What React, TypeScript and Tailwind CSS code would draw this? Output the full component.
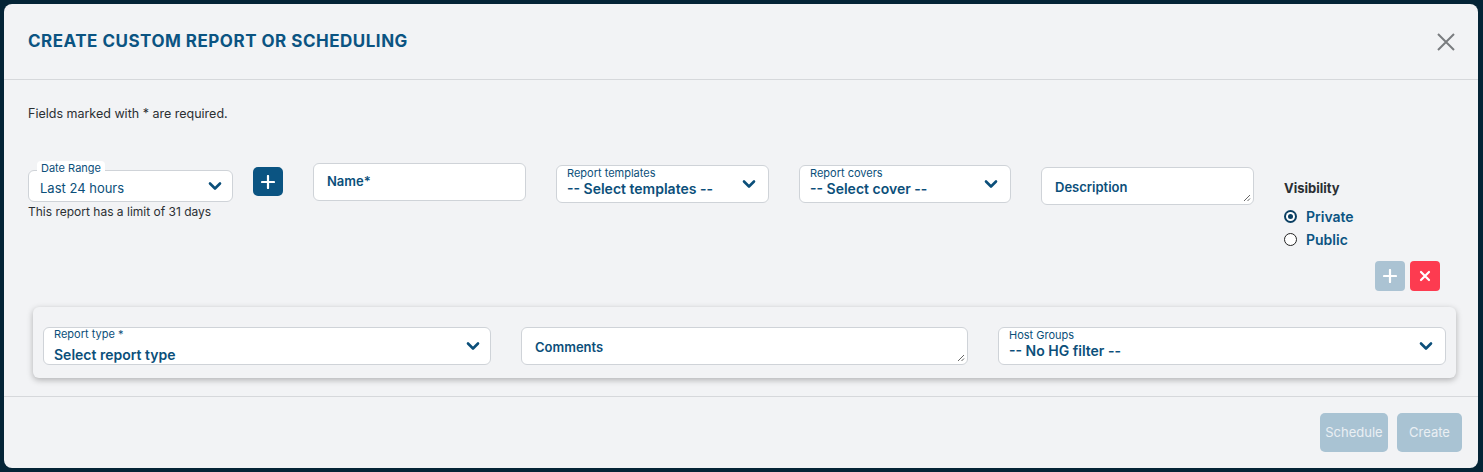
import React from "react";

const Chevron = () => (
  <svg width="14" height="10" viewBox="0 0 14 10" className="shrink-0">
    <path d="M2 2.5 L7 7.5 L12 2.5" fill="none" stroke="#0b4f7a" strokeWidth="2.6" strokeLinecap="round" strokeLinejoin="round" />
  </svg>
);

const Plus = ({ color = "#fff" }: { color?: string }) => (
  <svg width="14" height="14" viewBox="0 0 14 14">
    <path d="M7 1 V13 M1 7 H13" stroke={color} strokeWidth="2.2" strokeLinecap="round" />
  </svg>
);

const Grip = () => (
  <svg width="8" height="8" viewBox="0 0 8 8" className="absolute right-[2px] bottom-[2px]">
    <path d="M7 1 L1 7 M7 4.5 L4.5 7" stroke="#666" strokeWidth="1" />
  </svg>
);

const LabeledSelect = ({ label, value, w }: { label: string; value: string; w: string }) => (
  <div className={`${w} h-[38px] bg-white border border-[#cfd3d8] rounded-[6px] flex items-center pl-[10px] pr-[12px]`}>
    <div className="flex-1 flex flex-col leading-none pb-[3px]">
      <span className="text-[11px] text-[#0b4f7a] leading-[13px]">{label}</span>
      <span className="text-[14px] font-semibold text-[#0b4f7a] leading-[18px]">{value}</span>
    </div>
    <Chevron />
  </div>
);

const TextArea = ({ text, w }: { text: string; w: string }) => (
  <div className={`${w} h-[38px] bg-white border border-[#cfd3d8] rounded-[6px] relative pl-[13px] pt-[6px]`}>
    <span className="text-[13px] font-semibold text-[#0b4f7a] leading-[18px]">{text}</span>
    <Grip />
  </div>
);

export default function App() {
  return (
    <div
      className="w-[1483px] h-[472px] bg-[#042436] p-[4px] overflow-hidden"
      style={{ fontFamily: "Inter, 'Noto Sans', sans-serif" }}
    >
      <div className="w-[1474px] h-[464px] bg-[#f2f3f5] rounded-[8px] flex flex-col">
        {/* header */}
        <div className="h-[76px] border-b border-[#d6d8db] flex items-center justify-between pl-[24px] pr-[22px] shrink-0">
          <h1 className="text-[17px] font-bold tracking-[0.5px] text-[#0b5482] uppercase">
            Create custom report or scheduling
          </h1>
          <svg width="20" height="20" viewBox="0 0 20 20">
            <path d="M2 2 L18 18 M18 2 L2 18" stroke="#7a7c7f" strokeWidth="2" />
          </svg>
        </div>

        {/* body */}
        <div className="flex-1 flex flex-col pl-[24px] pr-[22px]">
          <p className="mt-[25px] text-[12.5px] text-[#2b2f33] leading-[18px]">Fields marked with * are required.</p>

          <div className="flex items-start mt-[40px]">
            {/* date range */}
            <div className="flex flex-col w-[205px] mt-[7px]">
              <div className="relative w-[205px] h-[32px] bg-white border border-[#cfd3d8] rounded-[6px] flex items-center pl-[11px] pr-[10px]">
                <span className="absolute left-[8px] top-[-10px] bg-white rounded-[4px] px-[4px] text-[11px] text-[#0b4f7a] leading-[14px]">
                  Date Range
                </span>
                <span className="flex-1 text-[13px] text-[#0b4f7a] pt-[5px]">Last 24 hours</span>
                <Chevron />
              </div>
              <span className="text-[12px] text-[#2b2f33] leading-[16px] mt-[2px]">This report has a limit of 31 days</span>
            </div>

            <div className="ml-[20px] mt-[4px] w-[30px] h-[29px] bg-[#0b5482] rounded-[5px] flex items-center justify-center">
              <Plus />
            </div>

            <div className="ml-[30px] w-[213px] h-[38px] bg-white border border-[#cfd3d8] rounded-[6px] flex items-center pl-[13px]">
              <span className="text-[13px] font-semibold text-[#0b4f7a]">Name*</span>
            </div>

            <div className="ml-[30px] mt-[2px]">
              <LabeledSelect label="Report templates" value="-- Select templates --" w="w-[213px]" />
            </div>
            <div className="ml-[30px] mt-[2px]">
              <LabeledSelect label="Report covers" value="-- Select cover --" w="w-[212px]" />
            </div>
            <div className="ml-[30px] mt-[4px]">
              <TextArea text="Description" w="w-[213px]" />
            </div>

            <div className="ml-[30px] flex-1 flex flex-col mt-[16px]">
              <span className="text-[13px] font-bold text-[#2b2f33] leading-[18px]">Visibility</span>
              <div className="flex items-center gap-[9px] mt-[10px] h-[18px]">
                <span className="w-[13px] h-[13px] rounded-full bg-[#0b3f63] flex items-center justify-center">
                  <span className="w-[9px] h-[9px] rounded-full bg-white flex items-center justify-center">
                    <span className="w-[5px] h-[5px] rounded-full bg-[#0b3f63]" />
                  </span>
                </span>
                <span className="text-[14px] font-semibold text-[#0b5482]">Private</span>
              </div>
              <div className="flex items-center gap-[9px] mt-[5px] h-[18px]">
                <span className="w-[13px] h-[13px] rounded-full border border-[#222] bg-white" />
                <span className="text-[14px] font-semibold text-[#0b5482]">Public</span>
              </div>
              <div className="flex justify-end gap-[5px] mt-[13px] pr-[16px]">
                <div className="w-[30px] h-[30px] bg-[#abc3d3] rounded-[4px] flex items-center justify-center">
                  <Plus />
                </div>
                <div className="w-[30px] h-[30px] bg-[#fd3b50] rounded-[4px] flex items-center justify-center">
                  <svg width="12" height="12" viewBox="0 0 12 12">
                    <path d="M2 2 L10 10 M10 2 L2 10" stroke="#fff" strokeWidth="2.2" strokeLinecap="round" />
                  </svg>
                </div>
              </div>
            </div>
          </div>

          {/* card */}
          <div className="mt-[16px] ml-[5px] w-[1423px] h-[71px] bg-[#f2f3f5] rounded-[6px] shadow-[0_2px_6px_rgba(0,0,0,0.28)] flex items-start gap-[30px] pt-[20px] pl-[10px]">
            <div className="w-[448px] h-[38px] bg-white border border-[#cfd3d8] rounded-[6px] flex items-center pl-[10px] pr-[10px]">
              <div className="flex-1 flex flex-col">
                <span className="text-[11px] text-[#0b4f7a] leading-[13px]">Report type *</span>
                <span className="text-[14px] font-semibold text-[#0b4f7a] leading-[18px] mt-[5px]">Select report type</span>
              </div>
              <Chevron />
            </div>
            <TextArea text="Comments" w="w-[447px]" />
            <LabeledSelect label="Host Groups" value="-- No HG filter --" w="w-[448px]" />
          </div>
        </div>

        {/* footer */}
        <div className="h-[72px] border-t border-[#d6d8db] flex items-start justify-end gap-[9px] pt-[16px] pr-[16px] shrink-0">
          <div className="w-[68px] h-[39px] bg-[#a9c3d3] rounded-[5px] flex items-center justify-center text-[13px] text-[#e9eff3]">
            Schedule
          </div>
          <div className="w-[65px] h-[39px] bg-[#a9c3d3] rounded-[5px] flex items-center justify-center text-[13px] text-[#e9eff3]">
            Create
          </div>
        </div>
      </div>
    </div>
  );
}
